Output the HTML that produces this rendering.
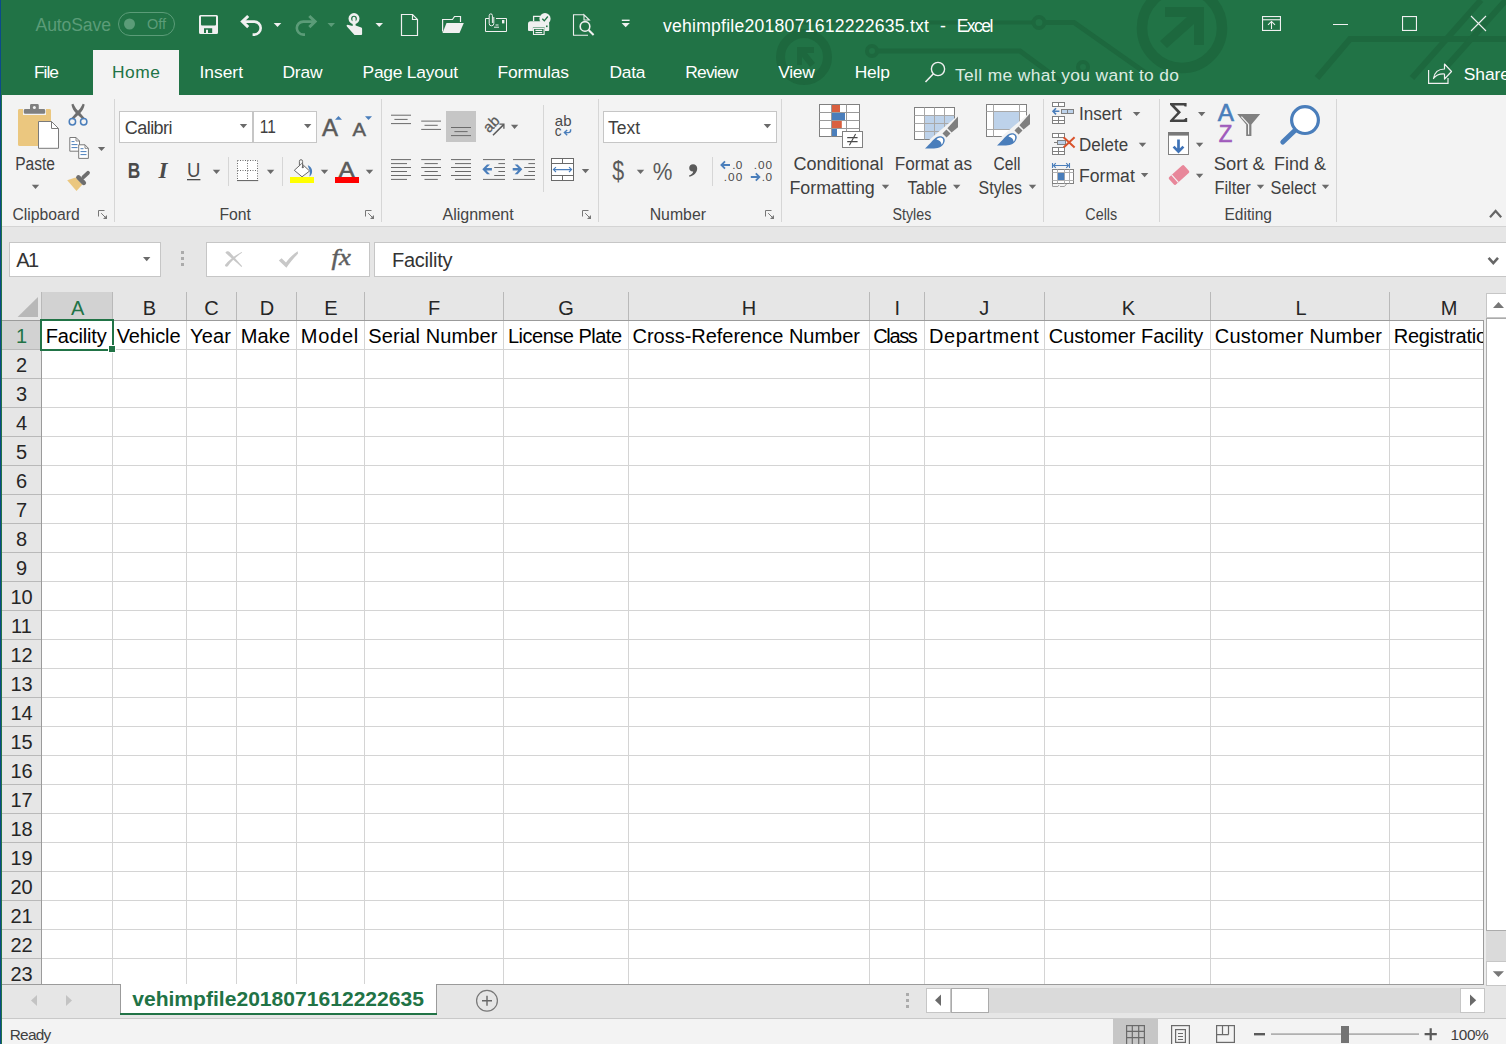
<!DOCTYPE html>
<html lang="en"><head><meta charset="utf-8"><title>vehimpfile2018071612222635.txt - Excel</title>
<style>
html,body{margin:0;padding:0;}
body{width:1506px;height:1044px;overflow:hidden;background:#e6e6e6;position:relative;
 font-family:"Liberation Sans",sans-serif;}
svg{position:absolute;left:0;display:block;font-family:"Liberation Sans",sans-serif;}
svg text{white-space:pre;}
</style></head><body>
<div id="titlebar">
<svg style="top:0px" class="title" width="1506" height="95" viewBox="0 0 1506 95">
<rect x="0" y="0" width="1506" height="95" fill="#217346"/>
<g><circle cx="804" cy="57" r="23.5" fill="none" stroke="#1d683e" stroke-width="9"/><path d="M797,47 h17 v6 h-7 l8,10 l-5,4 l-8,-10 v8 h-5 z" fill="#1d683e"/><circle cx="872" cy="51" r="5" fill="none" stroke="#1d683e" stroke-width="4"/><path d="M878,51 H1020 L1062,82" fill="none" stroke="#1d683e" stroke-width="5"/><path d="M760,22.5 H1032" fill="none" stroke="#1d683e" stroke-width="4"/><circle cx="1039" cy="22.5" r="5.5" fill="none" stroke="#1d683e" stroke-width="4"/><path d="M1046,22.5 H1074 L1150,76" fill="none" stroke="#1d683e" stroke-width="5"/><circle cx="1083" cy="67" r="5" fill="none" stroke="#1d683e" stroke-width="4"/><circle cx="1182" cy="28" r="40" fill="none" stroke="#1d683e" stroke-width="10.5"/><path d="M1165,7 h39 v38 h-10 v-21 l-27,24 l-7,-7 l27,-24 h-22 z" fill="#1d683e"/><path d="M1506,39 H1350 L1317,78" fill="none" stroke="#1d683e" stroke-width="6"/><path d="M1481,0 L1412,78" fill="none" stroke="#1d683e" stroke-width="6"/><path d="M1506,0 L1447,66" fill="none" stroke="#1d683e" stroke-width="6"/></g>
<text x="35.5" y="31" font-size="17.6" fill="#5b9c78" textLength="75.5" lengthAdjust="spacing">AutoSave</text>
<rect x="118.5" y="12.5" width="56" height="23" fill="none" stroke="#5b9c78" stroke-width="1" rx="11.5"/>
<circle cx="129.5" cy="24" r="5.5" fill="#5b9c78"/>
<text x="147" y="28.7" font-size="14.5" fill="#5b9c78" textLength="19" lengthAdjust="spacing">Off</text>
<path d="M200.5,15 h16 a1.5,1.5 0 0 1 1.5,1.5 v16 a1.5,1.5 0 0 1 -1.5,1.5 h-16 a1.5,1.5 0 0 1 -1.5,-1.5 v-16 a1.5,1.5 0 0 1 1.5,-1.5 z M201,16.5 v8 a1,1 0 0 0 1,1 h13 a1,1 0 0 0 1,-1 v-8 z M204,28.3 v4.7 h2 v-3.2 h2 v3.2 h4.2 v-4.7 z" fill="#f0f0f0" fill-rule="evenodd"/>
<path d="M248.2,16 L242.4,21.6 L248.2,27.2" fill="none" stroke="#f0f0f0" stroke-width="3" stroke-linejoin="miter"/>
<path d="M242.5,21.6 H254.2 a6.5,6.5 0 0 1 0,13 H252.6" fill="none" stroke="#f0f0f0" stroke-width="2.6"/>
<polygon points="273.7,23 281.3,23 277.5,27" fill="#f0f0f0"/>
<path d="M309.3,16 L315.1,21.6 L309.3,27.2" fill="none" stroke="#5b9c78" stroke-width="3"/>
<path d="M315,21.6 H303.3 a6.5,6.5 0 0 0 0,13 H305" fill="none" stroke="#5b9c78" stroke-width="2.6"/>
<polygon points="327.5,23 335,23 331.25,27" fill="#5b9c78"/>
<circle cx="354" cy="18.6" r="4.2" fill="none" stroke="#f0f0f0" stroke-width="2.6"/>
<path d="M352.4,18.4 a1.6,1.6 0 0 1 3.2,0 v7.1 l5.7,2 a1.2,1.2 0 0 1 0.8,1.2 v5.3 a1,1 0 0 1 -1,1 h-6.6 l-7.6,-8.6 a1,1 0 0 1 0.6,-1.6 l5.2,1.2 z" fill="#f0f0f0"/>
<polygon points="375.5,23 383,23 379.25,27" fill="#f0f0f0"/>
<path d="M401.5,14.5 H412.5 L417.5,19.5 V35.5 H401.5 Z" fill="none" stroke="#f0f0f0" stroke-width="1.2"/>
<path d="M412.5,14.5 V19.5 H417.5" fill="none" stroke="#f0f0f0" stroke-width="1.2"/>
<path d="M442.6,31.5 V19.5 H452.5 L454.5,16.5 H460.5 V22" fill="none" stroke="#f0f0f0" stroke-width="1.2"/>
<path d="M442.5,33 L446.5,23 H463.8 L459.5,33 Z" fill="#f0f0f0"/>
<path d="M489,18.5 H485.5 V31.5 H506.5 V18.5 H496" fill="none" stroke="#f0f0f0" stroke-width="1"/>
<path d="M493.8,17 V23.5 a2.3,2.3 0 0 1 -4.6,0 V15.5 a1.6,1.6 0 0 1 3.2,0 V23" fill="none" stroke="#f0f0f0" stroke-width="1"/>
<rect x="502" y="20" width="2.4" height="3.4" fill="#f0f0f0"/>
<rect x="495.5" y="24.5" width="3" height="1" fill="#f0f0f0"/>
<rect x="494" y="26.7" width="5" height="1" fill="#f0f0f0"/>
<path d="M530.6,21.3 h16 a2.6,2.6 0 0 1 2.6,2.6 v6 a1,1 0 0 1 -1,1 h-3.5 v-3.4 h-11.8 v3.4 h-3.9 a1,1 0 0 1 -1,-1 v-6 a2.6,2.6 0 0 1 2.6,-2.6 z" fill="#f0f0f0"/>
<path d="M533.6,21 V16.3 H540" fill="none" stroke="#f0f0f0" stroke-width="1.3"/>
<path d="M533.5,28.5 h10.6 v6 h-10.6 z M535.4,30.4 h6.8 M535.4,32.6 h6.8" fill="none" stroke="#f0f0f0" stroke-width="1.1"/>
<circle cx="545" cy="18.7" r="5.6" fill="#f0f0f0"/>
<path d="M542.3,18.8 l2,2 l3.5,-4.3" fill="none" stroke="#217346" stroke-width="1.3"/>
<rect x="546" y="25.5" width="1.6" height="1.6" fill="#217346"/>
<path d="M584,14.8 H573.5 V35.2 H588 M589.3,20 L584,14.8 V20 Z" fill="none" stroke="#f0f0f0" stroke-width="1.1"/>
<circle cx="585" cy="26.4" r="4.8" fill="#217346" stroke="#f0f0f0" stroke-width="1.6"/>
<path d="M588.6,30 L593.6,35" fill="none" stroke="#f0f0f0" stroke-width="2"/>
<rect x="621.8" y="19.6" width="7.8" height="1.4" fill="#f0f0f0"/>
<polygon points="621.6,23 629.8,23 625.7,27.2" fill="#f0f0f0"/>
<text x="663" y="31.7" font-size="17.6" fill="#ffffff" textLength="266" lengthAdjust="spacing">vehimpfile2018071612222635.txt</text>
<text x="940" y="31.7" font-size="17.6" fill="#ffffff" textLength="5" lengthAdjust="spacing">-</text>
<text x="956.7" y="31.7" font-size="17.6" fill="#ffffff" textLength="36.6" lengthAdjust="spacing">Excel</text>
<rect x="1262.55" y="16.55" width="17.9" height="13.9" fill="none" stroke="#f0f0f0" stroke-width="1.1"/>
<rect x="1262.5" y="19.2" width="18" height="1.1" fill="#f0f0f0"/>
<path d="M1271.5,29 V21.5 M1268,24.8 L1271.5,21.4 L1275,24.8" fill="none" stroke="#f0f0f0" stroke-width="1.1"/>
<rect x="1333" y="24" width="15" height="1" fill="#f0f0f0"/>
<rect x="1402.55" y="16.55" width="13.9" height="13.9" fill="none" stroke="#f0f0f0" stroke-width="1.1"/>
<path d="M1471,16 L1486,31 M1486,16 L1471,31" fill="none" stroke="#f0f0f0" stroke-width="1.1"/>
<rect x="93" y="50" width="86" height="45" fill="#f3f3f3"/>
<text x="34" y="77.6" font-size="17.4" fill="#ffffff" textLength="25" lengthAdjust="spacing">File</text>
<text x="112" y="77.6" font-size="17.4" fill="#217346" textLength="48" lengthAdjust="spacing">Home</text>
<text x="199.5" y="77.6" font-size="17.4" fill="#ffffff" textLength="43.5" lengthAdjust="spacing">Insert</text>
<text x="282.5" y="77.6" font-size="17.4" fill="#ffffff" textLength="40" lengthAdjust="spacing">Draw</text>
<text x="362.5" y="77.6" font-size="17.4" fill="#ffffff" textLength="95.5" lengthAdjust="spacing">Page Layout</text>
<text x="497.5" y="77.6" font-size="17.4" fill="#ffffff" textLength="71.5" lengthAdjust="spacing">Formulas</text>
<text x="609.5" y="77.6" font-size="17.4" fill="#ffffff" textLength="36" lengthAdjust="spacing">Data</text>
<text x="685.3" y="77.6" font-size="17.4" fill="#ffffff" textLength="53" lengthAdjust="spacing">Review</text>
<text x="778.3" y="77.6" font-size="17.4" fill="#ffffff" textLength="36.4" lengthAdjust="spacing">View</text>
<text x="854.7" y="77.6" font-size="17.4" fill="#ffffff" textLength="35.3" lengthAdjust="spacing">Help</text>
<circle cx="938" cy="69" r="6.6" fill="none" stroke="#f0f0f0" stroke-width="1.4"/>
<path d="M933.4,73.8 L925.5,82" fill="none" stroke="#f0f0f0" stroke-width="1.6"/>
<text x="955" y="80.8" font-size="17.4" fill="#dcebe2" textLength="224" lengthAdjust="spacing">Tell me what you want to do</text>
<path d="M1428.6,70 V83.4 H1448 V78" fill="none" stroke="#f0f0f0" stroke-width="1.2"/>
<path d="M1433.5,78.5 C1434.5,72 1439,69 1444.5,69 V64 L1451.5,71.5 L1444.5,79 V74 C1440,73.7 1436,75 1433.5,78.5 Z" fill="none" stroke="#f0f0f0" stroke-width="1.2" stroke-linejoin="round"/>
<text x="1463.7" y="80.3" font-size="17.4" fill="#ffffff" textLength="46.3" lengthAdjust="spacing">Share</text>
<rect x="0" y="0" width="1" height="95" fill="#0b4a8a"/>
</svg>
</div>
<div id="ribbon">
<svg style="top:95px" class="ribbon" width="1506" height="132" viewBox="0 95 1506 132">
<rect x="0" y="95" width="1506" height="131" fill="#f3f3f3"/>
<rect x="2" y="226" width="1504" height="1" fill="#d4d4d4"/>
<rect x="114" y="99" width="1" height="123" fill="#d6d6d6"/>
<rect x="381" y="99" width="1" height="123" fill="#d6d6d6"/>
<rect x="598" y="99" width="1" height="123" fill="#d6d6d6"/>
<rect x="781" y="99" width="1" height="123" fill="#d6d6d6"/>
<rect x="1043" y="99" width="1" height="123" fill="#d6d6d6"/>
<rect x="1159" y="99" width="1" height="123" fill="#d6d6d6"/>
<rect x="1336" y="99" width="1" height="123" fill="#d6d6d6"/>
<rect x="543" y="105" width="1" height="87" fill="#d6d6d6"/>
<rect x="228" y="157" width="1" height="29" fill="#d6d6d6"/>
<rect x="282" y="157" width="1" height="29" fill="#d6d6d6"/>
<rect x="712" y="157" width="1" height="29" fill="#d6d6d6"/>
<rect x="18" y="109" width="33" height="37" fill="#ebc77f" stroke="none" stroke-width="0" rx="2"/>
<rect x="18" y="109" width="33" height="37" rx="2" fill="#ebc77f"/>
<rect x="23" y="109" width="23" height="6" fill="#f3f3f3"/>
<path d="M30,109 v-3.6 a1.4,1.4 0 0 1 1.4,-1.4 h6 a1.4,1.4 0 0 1 1.4,1.4 v3.6 h5 a1.4,1.4 0 0 1 1.4,1.4 v2 a1.4,1.4 0 0 1 -1.4,1.4 h-18.6 a1.4,1.4 0 0 1 -1.4,-1.4 v-2 a1.4,1.4 0 0 1 1.4,-1.4 z" fill="#808080"/>
<circle cx="34.4" cy="107.5" r="1.5" fill="#f3f3f3"/>
<path d="M38.5,121.5 H51.5 L58.5,128.5 V148.3 H38.5 Z" fill="#ffffff" stroke="#7a7a7a" stroke-width="1"/>
<path d="M51.5,121.5 V128.5 H58.5" fill="none" stroke="#7a7a7a" stroke-width="1"/>
<text x="15.2" y="169.6" font-size="18" fill="#404040" textLength="39.8" lengthAdjust="spacingAndGlyphs">Paste</text>
<polygon points="31.8,184.8 39.2,184.8 35.5,189" fill="#6a6a6a"/>
<path d="M71.4,104.4 L73.4,103.8 C74.6,107 77,110 79.8,112.6 L85,118.4 L82.8,119.6 L76.2,113.4 C73.8,111 72,108 71.4,104.4 Z" fill="#6e6e6e"/>
<path d="M84.7,104.4 L82.7,103.8 C81.5,107 79.1,110 76.3,112.6 L71.1,118.4 L73.3,119.6 L79.9,113.4 C82.3,111 84.1,108 84.7,104.4 Z" fill="#6e6e6e"/>
<circle cx="72.4" cy="121.8" r="3.2" fill="none" stroke="#4a7ebb" stroke-width="1.5"/>
<circle cx="83.7" cy="121.8" r="3.2" fill="none" stroke="#4a7ebb" stroke-width="1.5"/>
<path d="M69.8,137.5 H76 L79.5,141 V151.2 H69.8 Z" fill="#ffffff" stroke="#7a7a7a" stroke-width="1"/>
<path d="M76,137.5 V141 H79.5" fill="none" stroke="#7a7a7a" stroke-width="0.9"/>
<path d="M71.5,141.6 h3 M71.5,144.6 h6 M71.5,147.6 h6" fill="none" stroke="#4a7ebb" stroke-width="1"/>
<path d="M78.7,144.8 H85 L88.4,148.3 V158.4 H78.7 Z" fill="#ffffff" stroke="#7a7a7a" stroke-width="1"/>
<path d="M85,144.8 V148.3 H88.4" fill="none" stroke="#7a7a7a" stroke-width="0.9"/>
<path d="M80.5,148.7 h3 M80.5,151.6 h6 M80.5,154.6 h6" fill="none" stroke="#4a7ebb" stroke-width="1"/>
<polygon points="97.8,146.9 105.2,146.9 101.5,151.1" fill="#6a6a6a"/>
<polygon points="67.2,180.2 75.5,177.6 82.4,184.6 76.5,191 " fill="#ebc77f"/>
<path d="M78.4,177.4 L83.8,182.8" fill="none" stroke="#6e6e6e" stroke-width="4.6" stroke-linecap="round"/>
<path d="M83.4,177.2 L88,172.8" fill="none" stroke="#6e6e6e" stroke-width="3.8" stroke-linecap="round"/>
<text x="12.5" y="220" font-size="16.9" fill="#444444" textLength="67.2" lengthAdjust="spacingAndGlyphs">Clipboard</text>
<path d="M98.5,216.5 V210.5 H104.5" fill="none" stroke="#777777" stroke-width="1"/>
<path d="M101.2,213.2 L106,218" fill="none" stroke="#777777" stroke-width="1"/>
<path d="M103,219 H107 V215 Z" fill="#777777"/>
<rect x="119.5" y="111.5" width="133" height="31" fill="#ffffff" stroke="#c6c6c6" stroke-width="1"/>
<rect x="253.5" y="111.5" width="63" height="31" fill="#ffffff" stroke="#c6c6c6" stroke-width="1"/>
<text x="124.8" y="133.9" font-size="18" fill="#404040" textLength="47.7" lengthAdjust="spacing">Calibri</text>
<text x="259.7" y="133.4" font-size="18" fill="#404040" textLength="16.1" lengthAdjust="spacingAndGlyphs">11</text>
<polygon points="239.8,124 247.2,124 243.5,128.2" fill="#6a6a6a"/>
<polygon points="304,124 311.4,124 307.7,128.2" fill="#6a6a6a"/>
<text x="322" y="136" font-size="23.8" fill="#5a5a5a" textLength="16" lengthAdjust="spacingAndGlyphs" stroke="#5a5a5a" stroke-width="0.5">A</text>
<polygon points="335,119.8 342,119.8 338.5,116" fill="#4a7ebb"/>
<text x="352.5" y="136" font-size="19.2" fill="#5a5a5a" textLength="13.5" lengthAdjust="spacingAndGlyphs" stroke="#5a5a5a" stroke-width="0.5">A</text>
<polygon points="365,116.2 372,116.2 368.5,120" fill="#4a7ebb"/>
<text x="127.7" y="177.6" font-size="21.8" fill="#4a4a4a" textLength="12.5" lengthAdjust="spacingAndGlyphs" font-weight="bold">B</text>
<text x="158.5" y="177.6" font-size="23" fill="#4a4a4a" textLength="9" lengthAdjust="spacingAndGlyphs" font-weight="bold" font-style="italic" font-family='"Liberation Serif", serif'>I</text>
<text x="186.9" y="177.2" font-size="21" fill="#4a4a4a" textLength="13.4" lengthAdjust="spacingAndGlyphs">U</text>
<rect x="187" y="179" width="13.4" height="1.3" fill="#4a4a4a"/>
<polygon points="212.8,169.8 220.2,169.8 216.5,174" fill="#6a6a6a"/>
<rect x="237.5" y="160.5" width="20" height="20" fill="#ffffff"/>
<path d="M237.5,160.5 H257.5 M237.5,170.5 H257.5 M237.5,160.5 V180 M247.5,160.5 V180 M257.5,160.5 V180" fill="none" stroke="#6a6a6a" stroke-width="1" stroke-dasharray="1,1.5"/>
<rect x="237" y="180" width="21.2" height="1.1" fill="#6a6a6a"/>
<polygon points="266.9,169.8 274.3,169.8 270.6,174" fill="#6a6a6a"/>
<path d="M301.7,163.6 L309.6,171 L302,176.8 L294.3,170.3 Z" fill="#ffffff" stroke="#6a6a6a" stroke-width="1"/>
<path d="M299.4,165.5 V161.3 a1.6,1.6 0 0 1 3.2,0 V167" fill="none" stroke="#6a6a6a" stroke-width="1"/>
<circle cx="302.8" cy="167.2" r="1.1" fill="#6a6a6a"/>
<path d="M307.8,165.2 C311,166.5 312.6,169.5 312,172.5 C311.6,174.5 310.6,176 309.4,176.4 C310.2,173 310,170 308.6,168 Z" fill="#4a7ebb"/>
<rect x="290" y="177" width="24" height="6" fill="#ffff00"/>
<polygon points="320.8,169.8 328.2,169.8 324.5,174" fill="#6a6a6a"/>
<text x="338.8" y="176.8" font-size="21.2" fill="#5a5a5a" textLength="15.8" lengthAdjust="spacingAndGlyphs" stroke="#5a5a5a" stroke-width="0.6">A</text>
<rect x="335" y="177" width="24" height="6" fill="#ff0000"/>
<polygon points="365.8,169.8 373.2,169.8 369.5,174" fill="#6a6a6a"/>
<text x="219.5" y="220" font-size="16.9" fill="#444444" textLength="31.5" lengthAdjust="spacingAndGlyphs">Font</text>
<path d="M365.5,216.5 V210.5 H371.5" fill="none" stroke="#777777" stroke-width="1"/>
<path d="M368.2,213.2 L373,218" fill="none" stroke="#777777" stroke-width="1"/>
<path d="M370,219 H374 V215 Z" fill="#777777"/>
<rect x="391" y="114.7" width="20" height="1" fill="#6a6a6a"/>
<rect x="394.4" y="118.9" width="13.2" height="1" fill="#6a6a6a"/>
<rect x="391" y="123.1" width="20" height="1" fill="#6a6a6a"/>
<rect x="421.2" y="120.6" width="19.8" height="1" fill="#6a6a6a"/>
<rect x="424.5" y="124.8" width="13.2" height="1" fill="#6a6a6a"/>
<rect x="421.2" y="128.9" width="19.8" height="1" fill="#6a6a6a"/>
<rect x="446" y="111" width="30" height="31" fill="#c6c6c6"/>
<rect x="451" y="127" width="20" height="1" fill="#6a6a6a"/>
<rect x="454.4" y="131.1" width="13.2" height="1" fill="#6a6a6a"/>
<rect x="451" y="135.1" width="20" height="1" fill="#6a6a6a"/>
<rect x="391" y="159.1" width="20" height="1" fill="#6a6a6a"/>
<rect x="391" y="163.1" width="16" height="1" fill="#6a6a6a"/>
<rect x="391" y="167" width="20" height="1" fill="#6a6a6a"/>
<rect x="391" y="171" width="16" height="1" fill="#6a6a6a"/>
<rect x="391" y="175" width="20" height="1" fill="#6a6a6a"/>
<rect x="391" y="178.9" width="16" height="1" fill="#6a6a6a"/>
<rect x="421.2" y="159.1" width="19.8" height="1" fill="#6a6a6a"/>
<rect x="424.5" y="163.1" width="13.3" height="1" fill="#6a6a6a"/>
<rect x="421.2" y="167" width="19.8" height="1" fill="#6a6a6a"/>
<rect x="424.5" y="171" width="13.3" height="1" fill="#6a6a6a"/>
<rect x="421.2" y="175" width="19.8" height="1" fill="#6a6a6a"/>
<rect x="424.5" y="178.9" width="13.3" height="1" fill="#6a6a6a"/>
<rect x="451" y="159.1" width="20" height="1" fill="#6a6a6a"/>
<rect x="455" y="163.1" width="16" height="1" fill="#6a6a6a"/>
<rect x="451" y="167" width="20" height="1" fill="#6a6a6a"/>
<rect x="455" y="171" width="16" height="1" fill="#6a6a6a"/>
<rect x="451" y="175" width="20" height="1" fill="#6a6a6a"/>
<rect x="455" y="178.9" width="16" height="1" fill="#6a6a6a"/>
<rect x="483" y="159.1" width="22" height="1" fill="#6a6a6a"/>
<rect x="498.4" y="163.1" width="6.6" height="1" fill="#6a6a6a"/>
<rect x="494.2" y="167" width="10.8" height="1" fill="#6a6a6a"/>
<rect x="498.4" y="171" width="6.6" height="1" fill="#6a6a6a"/>
<rect x="494.2" y="175" width="10.8" height="1" fill="#6a6a6a"/>
<rect x="483" y="178.9" width="22" height="1" fill="#6a6a6a"/>
<rect x="513" y="159.1" width="22" height="1" fill="#6a6a6a"/>
<rect x="528.4" y="163.1" width="6.6" height="1" fill="#6a6a6a"/>
<rect x="524.2" y="167" width="10.8" height="1" fill="#6a6a6a"/>
<rect x="528.4" y="171" width="6.6" height="1" fill="#6a6a6a"/>
<rect x="524.2" y="175" width="10.8" height="1" fill="#6a6a6a"/>
<rect x="513" y="178.9" width="22" height="1" fill="#6a6a6a"/>
<path d="M482.3,169.3 L487,164.4 H490 L486.4,168 H491.9 V170.6 H486.4 L490,174.2 H487 Z" fill="#4a7ebb"/>
<path d="M522.3,169.3 L517.6,164.4 H514.6 L518.2,168 H512.7 V170.6 H518.2 L514.6,174.2 H517.6 Z" fill="#4a7ebb"/>
<g transform="translate(489,133.4) rotate(-45)"><text x="0" y="0" font-size="15" fill="#5a5a5a" stroke="#5a5a5a" stroke-width="0.3" textLength="16.4" lengthAdjust="spacingAndGlyphs">ab</text></g>
<path d="M493,135.2 L503.6,124.6" fill="none" stroke="#5a5a5a" stroke-width="1.5"/>
<path d="M499.4,124.1 H503.9 V128.8" fill="none" stroke="#5a5a5a" stroke-width="1.3"/>
<polygon points="510.9,124.7 518.3,124.7 514.6,128.9" fill="#6a6a6a"/>
<text x="554.8" y="125.5" font-size="14.5" fill="#4a4a4a" textLength="16.7" lengthAdjust="spacingAndGlyphs">ab</text>
<text x="554.8" y="135.7" font-size="14.5" fill="#4a4a4a" textLength="6.8" lengthAdjust="spacingAndGlyphs">c</text>
<path d="M570.6,129.3 V130.6 a2,2 0 0 1 -2,2 H564.8 M567.2,130 L564.4,132.6 L567.2,135.2" fill="none" stroke="#4a7ebb" stroke-width="1.4"/>
<rect x="551.5" y="158.5" width="22" height="22" fill="#ffffff" stroke="#6a6a6a" stroke-width="1"/>
<path d="M551.5,163.5 H573.5 M551.5,175.5 H573.5 M562.5,158.5 V163.5 M562.5,175.5 V180.5" fill="none" stroke="#6a6a6a" stroke-width="1"/>
<path d="M553.6,169.6 H571.4 M556,167.2 L553.4,169.6 L556,172 M569,167.2 L571.6,169.6 L569,172" fill="none" stroke="#4a7ebb" stroke-width="1.1"/>
<polygon points="581.8,169 589.2,169 585.5,173.2" fill="#6a6a6a"/>
<text x="442.5" y="220" font-size="16.9" fill="#444444" textLength="71.2" lengthAdjust="spacingAndGlyphs">Alignment</text>
<path d="M582.5,216.5 V210.5 H588.5" fill="none" stroke="#777777" stroke-width="1"/>
<path d="M585.2,213.2 L590,218" fill="none" stroke="#777777" stroke-width="1"/>
<path d="M587,219 H591 V215 Z" fill="#777777"/>
<rect x="603.5" y="111.5" width="173" height="31" fill="#ffffff" stroke="#c6c6c6" stroke-width="1"/>
<text x="608" y="133.7" font-size="18" fill="#404040" textLength="32" lengthAdjust="spacingAndGlyphs">Text</text>
<polygon points="763.7,124 771.1,124 767.4,128.2" fill="#6a6a6a"/>
<text x="612.3" y="179.9" font-size="27" fill="#5a5a5a" textLength="11.9" lengthAdjust="spacingAndGlyphs">$</text>
<polygon points="636.8,169.8 644.2,169.8 640.5,174" fill="#6a6a6a"/>
<text x="652.8" y="180" font-size="24.5" fill="#5a5a5a" textLength="19.7" lengthAdjust="spacingAndGlyphs">%</text>
<path d="M693,164.2 C695.6,164.2 697.2,166 697.2,168.6 C697.2,172.6 694,175.6 689.4,176.8 L689,175.6 C691.6,174.6 693,173.2 693.2,171.6 C690.8,171.8 689.2,170.2 689.2,168 C689.2,165.8 690.8,164.2 693,164.2 Z" fill="#5a5a5a"/>
<path d="M725,161.4 L721.4,165 L725,168.6 M721.8,165 H730" fill="none" stroke="#4a7ebb" stroke-width="1.8"/>
<text x="732.2" y="168.7" font-size="11.8" fill="#4a4a4a" textLength="10" lengthAdjust="spacing">.0</text>
<text x="723.8" y="180.7" font-size="11.8" fill="#4a4a4a" textLength="18.4" lengthAdjust="spacing">.00</text>
<text x="753.7" y="168.7" font-size="11.8" fill="#4a4a4a" textLength="18.4" lengthAdjust="spacing">.00</text>
<path d="M755.8,173.4 L759.4,177 L755.8,180.6 M759,177 H750.8" fill="none" stroke="#4a7ebb" stroke-width="1.8"/>
<text x="761.8" y="180.7" font-size="11.8" fill="#4a4a4a" textLength="10.3" lengthAdjust="spacing">.0</text>
<text x="649.7" y="220" font-size="16.9" fill="#444444" textLength="56.3" lengthAdjust="spacingAndGlyphs">Number</text>
<path d="M765.5,216.5 V210.5 H771.5" fill="none" stroke="#777777" stroke-width="1"/>
<path d="M768.2,213.2 L773,218" fill="none" stroke="#777777" stroke-width="1"/>
<path d="M770,219 H774 V215 Z" fill="#777777"/>
<rect x="819.5" y="104.5" width="40" height="32" fill="#ffffff" stroke="#808080" stroke-width="1"/>
<path d="M819.5,112.5 H859.5 M819.5,120.5 H859.5 M819.5,128.5 H859.5 M831.5,104.5 V136.5 M846.5,104.5 V136.5" fill="none" stroke="#9a9a9a" stroke-width="1"/>
<rect x="832" y="105" width="8" height="7" fill="#d9603f"/>
<rect x="832" y="113" width="13" height="7" fill="#4a7ebb"/>
<rect x="832" y="121" width="9.8" height="7" fill="#d9603f"/>
<rect x="832" y="129" width="5" height="7" fill="#4a7ebb"/>
<rect x="842.5" y="131.5" width="20" height="16" fill="#ffffff" stroke="#808080" stroke-width="1"/>
<path d="M847.2,137.6 H857.6 M847.2,141.6 H857.6 M855.6,134 L849.4,145.2" fill="none" stroke="#4a4a4a" stroke-width="1.1"/>
<text x="793.5" y="169.6" font-size="18" fill="#404040" textLength="90.1" lengthAdjust="spacingAndGlyphs">Conditional</text>
<text x="789.4" y="193.5" font-size="18" fill="#404040" textLength="85.4" lengthAdjust="spacingAndGlyphs">Formatting</text>
<polygon points="881.8,184.8 889.2,184.8 885.5,189" fill="#6a6a6a"/>
<rect x="914.5" y="107.5" width="40" height="32" fill="#ffffff" stroke="#808080" stroke-width="1"/>
<rect x="925" y="116" width="29" height="23" fill="#bdd2ea"/>
<path d="M914.5,115.5 H954.5 M914.5,123.5 H954.5 M914.5,131.5 H954.5 M924.5,107.5 V139.5 M934.5,107.5 V139.5 M944.5,107.5 V139.5" fill="none" stroke="#a8a8a8" stroke-width="1"/>
<polygon points="955,118 958.5,114 958.5,150 920,150 920,148 936,134" fill="#f3f3f3"/>
<polygon points="958,116.5 958,127.3 951.6,132.4 947.4,128.2" fill="#7f7f7f"/>
<polygon points="946.4,129.4 950.5,133.5 946.6,137.6 942.5,133.6" fill="#7f7f7f"/>
<path d="M925,148.4 C931,143.5 934,137 939.5,136.2 C943,135.8 945.5,138.5 944.6,141.5 C943.5,146 939,148.4 934,148.4 Z" fill="#4a7ebb"/>
<path d="M936.5,139.5 C938,137.6 940.8,137 942.4,138.2 C943.8,139.6 943.4,142.8 941.6,144.8 C941.4,142 939.4,140 936.5,139.5 Z" fill="#ffffff"/>
<text x="894.8" y="169.6" font-size="18" fill="#404040" textLength="77.2" lengthAdjust="spacingAndGlyphs">Format as</text>
<text x="907.5" y="193.5" font-size="18" fill="#404040" textLength="39.4" lengthAdjust="spacingAndGlyphs">Table</text>
<polygon points="953,184.8 960.4,184.8 956.7,189" fill="#6a6a6a"/>
<rect x="986.5" y="104.5" width="40" height="32" fill="#ffffff" stroke="#808080" stroke-width="1"/>
<rect x="994" y="112" width="25" height="17" fill="#bdd2ea"/>
<path d="M986.5,111.5 H1026.5 M986.5,129.5 H1026.5 M993.5,104.5 V136.5 M1019.5,104.5 V136.5" fill="none" stroke="#a8a8a8" stroke-width="1"/>
<polygon points="1027,115 1030.5,111 1030.5,147 992,147 992,145 1008,131" fill="#f3f3f3"/>
<polygon points="1030,113.5 1030,124.3 1023.6,129.4 1019.4,125.2" fill="#7f7f7f"/>
<polygon points="1018.4,126.4 1022.5,130.5 1018.6,134.6 1014.5,130.6" fill="#7f7f7f"/>
<path d="M997,145.4 C1003,140.5 1006,134 1011.5,133.2 C1015,132.8 1017.5,135.5 1016.6,138.5 C1015.5,143 1011,145.4 1006,145.4 Z" fill="#4a7ebb"/>
<path d="M1008.5,136.5 C1010,134.6 1012.8,134 1014.4,135.2 C1015.8,136.6 1015.4,139.8 1013.6,141.8 C1013.4,139 1011.4,137 1008.5,136.5 Z" fill="#ffffff"/>
<text x="993.4" y="169.6" font-size="18" fill="#404040" textLength="27" lengthAdjust="spacingAndGlyphs">Cell</text>
<text x="978.6" y="193.5" font-size="18" fill="#404040" textLength="43.4" lengthAdjust="spacingAndGlyphs">Styles</text>
<polygon points="1028.8,184.8 1036.2,184.8 1032.5,189" fill="#6a6a6a"/>
<text x="892.5" y="220" font-size="16.9" fill="#444444" textLength="38.8" lengthAdjust="spacingAndGlyphs">Styles</text>
<rect x="1052.5" y="102.5" width="12" height="4" fill="#ffffff" stroke="#808080" stroke-width="1"/>
<path d="M1058.5,102.5 V106.5" fill="none" stroke="#808080" stroke-width="1"/>
<rect x="1061.5" y="109.5" width="12" height="4" fill="#bdd2ea" stroke="#808080" stroke-width="1"/>
<rect x="1067" y="109.5" width="1" height="4" fill="#808080"/>
<path d="M1056,108.2 L1053,111.3 L1056,114.4 M1053.4,111.3 H1059.4" fill="none" stroke="#4a7ebb" stroke-width="1.6"/>
<rect x="1052.5" y="116.5" width="12" height="7" fill="#ffffff" stroke="#808080" stroke-width="1"/>
<path d="M1058.5,116.5 V123.5 M1052.5,120.5 H1064.5" fill="none" stroke="#808080" stroke-width="1"/>
<text x="1079" y="119.8" font-size="18" fill="#404040" textLength="42.8" lengthAdjust="spacingAndGlyphs">Insert</text>
<polygon points="1132.9,111.9 1140.3,111.9 1136.6,116.1" fill="#6a6a6a"/>
<rect x="1052.5" y="133.5" width="12" height="4" fill="#ffffff" stroke="#808080" stroke-width="1"/>
<path d="M1058.5,133.5 V137.5" fill="none" stroke="#808080" stroke-width="1"/>
<rect x="1057.5" y="140.5" width="8" height="4" fill="#bdd2ea" stroke="#808080" stroke-width="1"/>
<rect x="1054" y="142" width="3" height="1" fill="#808080"/>
<rect x="1052.5" y="147.5" width="12" height="7" fill="#ffffff" stroke="#808080" stroke-width="1"/>
<path d="M1058.5,147.5 V154.5 M1052.5,151.5 H1064.5" fill="none" stroke="#808080" stroke-width="1"/>
<rect x="1062" y="136" width="14" height="12" fill="#f3f3f3" opacity="0.0"/>
<path d="M1063.6,137.2 L1074.6,147.6 M1074.6,137.2 L1063.6,147.6" fill="none" stroke="#d9532c" stroke-width="2"/>
<text x="1079" y="150.9" font-size="18" fill="#404040" textLength="49.1" lengthAdjust="spacingAndGlyphs">Delete</text>
<polygon points="1138.8,142.8 1146.2,142.8 1142.5,147" fill="#6a6a6a"/>
<path d="M1052.5,163 V168 M1069.5,163 V168 M1053.5,165.5 H1068.5 M1055.8,163.2 L1053.4,165.5 L1055.8,167.8 M1066.2,163.2 L1068.6,165.5 L1066.2,167.8" fill="none" stroke="#4a7ebb" stroke-width="1.1"/>
<rect x="1052.5" y="169.5" width="21" height="14" fill="#ffffff" stroke="#808080" stroke-width="1"/>
<path d="M1052.5,172.5 H1073.5 M1052.5,180.5 H1073.5 M1057.5,169.5 V183.5 M1064.5,169.5 V183.5 M1069.5,169.5 V183.5" fill="none" stroke="#b0b0b0" stroke-width="1"/>
<rect x="1058" y="173" width="6.2" height="7" fill="#4a7ebb"/>
<path d="M1052.5,184 V186.5 H1058 L1059,185 M1060,186.5 H1064.5 L1066.5,184" fill="none" stroke="#a0a0a0" stroke-width="1"/>
<text x="1079" y="181.9" font-size="18" fill="#404040" textLength="55.8" lengthAdjust="spacingAndGlyphs">Format</text>
<polygon points="1140.9,173 1148.3,173 1144.6,177.2" fill="#6a6a6a"/>
<text x="1085.3" y="220" font-size="16.9" fill="#444444" textLength="31.9" lengthAdjust="spacingAndGlyphs">Cells</text>
<path d="M1170,103 H1186.6 V106.4 H1184.6 C1184.4,105.6 1184,105.4 1183,105.4 H1174.4 L1181,112.2 L1174,119.4 H1183.4 C1184.6,119.4 1185,119 1185.4,118 H1187.2 V121.9 H1169.9 V120.4 L1177.4,112.6 L1170,104.8 Z" fill="#444444"/>
<polygon points="1198,112.1 1205.4,112.1 1201.7,116.3" fill="#6a6a6a"/>
<rect x="1168.5" y="132.5" width="20" height="22" fill="#ffffff" stroke="#808080" stroke-width="1"/>
<rect x="1168" y="132" width="21" height="3.6" fill="#7a7a7a"/>
<path d="M1178.5,139.4 V151.4 M1173.6,146.6 L1178.5,151.6 L1183.4,146.6" fill="none" stroke="#3f73b7" stroke-width="2.7"/>
<polygon points="1195.9,142.8 1203.3,142.8 1199.6,147" fill="#6a6a6a"/>
<g transform="rotate(-42 1179 175)"><rect x="1168.8" y="170" width="20.4" height="10" rx="1.6" fill="#e8879a"/><rect x="1173" y="170" width="1.2" height="10" fill="#f3f3f3"/></g>
<polygon points="1195.9,173.8 1203.3,173.8 1199.6,178" fill="#6a6a6a"/>
<text x="1217.8" y="120.7" font-size="23.4" fill="#4a7ebb" textLength="16.2" lengthAdjust="spacingAndGlyphs" stroke="#4a7ebb" stroke-width="0.6">A</text>
<text x="1218.8" y="142" font-size="23.4" fill="#a05bbc" textLength="13.6" lengthAdjust="spacingAndGlyphs" stroke="#a05bbc" stroke-width="0.6">Z</text>
<path d="M1237.2,114 H1260.2 L1251.4,124.6 V136 H1246.2 V124.6 Z" fill="#808080"/>
<path d="M1241.4,116.6 L1248.6,124.4 V134.6" fill="none" stroke="#f3f3f3" stroke-width="1.2"/>
<text x="1213.8" y="169.6" font-size="18" fill="#404040" textLength="51.1" lengthAdjust="spacingAndGlyphs">Sort &amp;</text>
<text x="1214.4" y="193.5" font-size="18" fill="#404040" textLength="36.4" lengthAdjust="spacingAndGlyphs">Filter</text>
<polygon points="1256.8,184.8 1264.2,184.8 1260.5,189" fill="#6a6a6a"/>
<path d="M1295.4,130 L1282.8,142" fill="none" stroke="#4a7ebb" stroke-width="5" stroke-linecap="round"/>
<circle cx="1305" cy="120.1" r="13.4" fill="#ffffff" stroke="#4a7ebb" stroke-width="3.2"/>
<text x="1274.1" y="169.6" font-size="18" fill="#404040" textLength="51.8" lengthAdjust="spacingAndGlyphs">Find &amp;</text>
<text x="1270.6" y="193.5" font-size="18" fill="#404040" textLength="45.4" lengthAdjust="spacingAndGlyphs">Select</text>
<polygon points="1321.8,184.8 1329.2,184.8 1325.5,189" fill="#6a6a6a"/>
<text x="1224.5" y="220" font-size="16.9" fill="#444444" textLength="47.5" lengthAdjust="spacingAndGlyphs">Editing</text>
<path d="M1490,217.2 L1495.6,211 L1501.2,217.2" fill="none" stroke="#666666" stroke-width="2.2"/>
<rect x="0" y="95" width="1" height="132" fill="#0b4a8a"/>
<rect x="1" y="95" width="1" height="132" fill="#217346"/>
</svg>
</div>
<div id="formulabar">
<svg style="top:227px" class="formula" width="1506" height="65" viewBox="0 227 1506 65">
<rect x="0" y="227" width="1506" height="65" fill="#e6e6e6"/>
<rect x="9.5" y="242.5" width="151" height="34" fill="#ffffff" stroke="#c6c6c6" stroke-width="1"/>
<text x="16.2" y="267" font-size="20" fill="#333333" textLength="22.8" lengthAdjust="spacing">A1</text>
<polygon points="143,257 150.4,257 146.7,261.2" fill="#6a6a6a"/>
<rect x="181" y="251" width="3" height="3" fill="#ababab"/>
<rect x="181" y="257" width="3" height="3" fill="#ababab"/>
<rect x="181" y="263" width="3" height="3" fill="#ababab"/>
<rect x="206.5" y="242.5" width="163" height="34" fill="#ffffff" stroke="#c6c6c6" stroke-width="1"/>
<path d="M225.4,252.8 C226.6,251 228.6,251 229.8,252.2 L242.2,266.2 L241.4,266.9 C236,262 230,257.2 225.4,252.8 Z" fill="#c8c8c8"/>
<path d="M242.2,252.6 L241.6,251.9 C235,255.4 228.8,260 225,265 C224.8,266.6 226.6,267.2 227.8,266.2 C231,261.6 236,256.6 242.2,252.6 Z" fill="#c8c8c8"/>
<path d="M278.8,260.4 L281.6,258.2 L286,262.6 C289,258.2 293,254.4 297.7,251.2 L298,253.8 C293.6,258 289.6,263 286.4,267.8 Z" fill="#c8c8c8"/>
<text x="331.5" y="265.2" font-size="23" fill="#5e5e5e" textLength="19.3" lengthAdjust="spacingAndGlyphs" font-style="italic" font-family='"Liberation Serif", serif' stroke="#5e5e5e" stroke-width="0.45">fx</text>
<rect x="374.5" y="242.5" width="1139" height="34" fill="#ffffff" stroke="#c6c6c6" stroke-width="1"/>
<text x="392" y="267" font-size="20" fill="#333333" textLength="60.5" lengthAdjust="spacing">Facility</text>
<path d="M1488.6,257.8 L1493.3,263 L1498,257.8" fill="none" stroke="#666666" stroke-width="2.6"/>
<rect x="0" y="227" width="1" height="65" fill="#0b4a8a"/>
<rect x="1" y="227" width="1" height="65" fill="#217346"/>
</svg>
</div>
<div id="sheet">
<svg style="top:292px" class="grid" width="1506" height="692" viewBox="0 292 1506 692">
<rect x="0" y="292" width="1506" height="692" fill="#e6e6e6"/>
<rect x="42" y="321" width="1441" height="663" fill="#ffffff"/>
<rect x="42" y="292" width="70" height="28" fill="#d2d2d2"/>
<rect x="2" y="321" width="39" height="28" fill="#d2d2d2"/>
<polygon points="38,297 38,317 17.6,317" fill="#b8b8b8"/>
<rect x="41" y="292" width="1" height="28" fill="#b9b9b9"/>
<rect x="112" y="292" width="1" height="28" fill="#b9b9b9"/>
<rect x="186" y="292" width="1" height="28" fill="#b9b9b9"/>
<rect x="236" y="292" width="1" height="28" fill="#b9b9b9"/>
<rect x="296" y="292" width="1" height="28" fill="#b9b9b9"/>
<rect x="364" y="292" width="1" height="28" fill="#b9b9b9"/>
<rect x="503" y="292" width="1" height="28" fill="#b9b9b9"/>
<rect x="628" y="292" width="1" height="28" fill="#b9b9b9"/>
<rect x="869" y="292" width="1" height="28" fill="#b9b9b9"/>
<rect x="924" y="292" width="1" height="28" fill="#b9b9b9"/>
<rect x="1044" y="292" width="1" height="28" fill="#b9b9b9"/>
<rect x="1210" y="292" width="1" height="28" fill="#b9b9b9"/>
<rect x="1389" y="292" width="1" height="28" fill="#b9b9b9"/>
<text x="77.75" y="315" font-size="20" fill="#217346" text-anchor="middle">A</text>
<text x="149.5" y="315" font-size="20" fill="#262626" text-anchor="middle">B</text>
<text x="211.5" y="315" font-size="20" fill="#262626" text-anchor="middle">C</text>
<text x="267.05" y="315" font-size="20" fill="#262626" text-anchor="middle">D</text>
<text x="331" y="315" font-size="20" fill="#262626" text-anchor="middle">E</text>
<text x="434.15" y="315" font-size="20" fill="#262626" text-anchor="middle">F</text>
<text x="566.1" y="315" font-size="20" fill="#262626" text-anchor="middle">G</text>
<text x="749" y="315" font-size="20" fill="#262626" text-anchor="middle">H</text>
<text x="897.35" y="315" font-size="20" fill="#262626" text-anchor="middle">I</text>
<text x="984.15" y="315" font-size="20" fill="#262626" text-anchor="middle">J</text>
<text x="1128.5" y="315" font-size="20" fill="#262626" text-anchor="middle">K</text>
<text x="1301" y="315" font-size="20" fill="#262626" text-anchor="middle">L</text>
<text x="1449" y="315" font-size="20" fill="#262626" text-anchor="middle">M</text>
<rect x="112" y="321" width="1" height="663" fill="#d4d4d4"/>
<rect x="186" y="321" width="1" height="663" fill="#d4d4d4"/>
<rect x="236" y="321" width="1" height="663" fill="#d4d4d4"/>
<rect x="296" y="321" width="1" height="663" fill="#d4d4d4"/>
<rect x="364" y="321" width="1" height="663" fill="#d4d4d4"/>
<rect x="503" y="321" width="1" height="663" fill="#d4d4d4"/>
<rect x="628" y="321" width="1" height="663" fill="#d4d4d4"/>
<rect x="869" y="321" width="1" height="663" fill="#d4d4d4"/>
<rect x="924" y="321" width="1" height="663" fill="#d4d4d4"/>
<rect x="1044" y="321" width="1" height="663" fill="#d4d4d4"/>
<rect x="1210" y="321" width="1" height="663" fill="#d4d4d4"/>
<rect x="1389" y="321" width="1" height="663" fill="#d4d4d4"/>
<rect x="42" y="349" width="1441" height="1" fill="#d4d4d4"/>
<rect x="2" y="349" width="39" height="1" fill="#b9b9b9"/>
<rect x="42" y="378" width="1441" height="1" fill="#d4d4d4"/>
<rect x="2" y="378" width="39" height="1" fill="#b9b9b9"/>
<rect x="42" y="407" width="1441" height="1" fill="#d4d4d4"/>
<rect x="2" y="407" width="39" height="1" fill="#b9b9b9"/>
<rect x="42" y="436" width="1441" height="1" fill="#d4d4d4"/>
<rect x="2" y="436" width="39" height="1" fill="#b9b9b9"/>
<rect x="42" y="465" width="1441" height="1" fill="#d4d4d4"/>
<rect x="2" y="465" width="39" height="1" fill="#b9b9b9"/>
<rect x="42" y="494" width="1441" height="1" fill="#d4d4d4"/>
<rect x="2" y="494" width="39" height="1" fill="#b9b9b9"/>
<rect x="42" y="523" width="1441" height="1" fill="#d4d4d4"/>
<rect x="2" y="523" width="39" height="1" fill="#b9b9b9"/>
<rect x="42" y="552" width="1441" height="1" fill="#d4d4d4"/>
<rect x="2" y="552" width="39" height="1" fill="#b9b9b9"/>
<rect x="42" y="581" width="1441" height="1" fill="#d4d4d4"/>
<rect x="2" y="581" width="39" height="1" fill="#b9b9b9"/>
<rect x="42" y="610" width="1441" height="1" fill="#d4d4d4"/>
<rect x="2" y="610" width="39" height="1" fill="#b9b9b9"/>
<rect x="42" y="639" width="1441" height="1" fill="#d4d4d4"/>
<rect x="2" y="639" width="39" height="1" fill="#b9b9b9"/>
<rect x="42" y="668" width="1441" height="1" fill="#d4d4d4"/>
<rect x="2" y="668" width="39" height="1" fill="#b9b9b9"/>
<rect x="42" y="697" width="1441" height="1" fill="#d4d4d4"/>
<rect x="2" y="697" width="39" height="1" fill="#b9b9b9"/>
<rect x="42" y="726" width="1441" height="1" fill="#d4d4d4"/>
<rect x="2" y="726" width="39" height="1" fill="#b9b9b9"/>
<rect x="42" y="755" width="1441" height="1" fill="#d4d4d4"/>
<rect x="2" y="755" width="39" height="1" fill="#b9b9b9"/>
<rect x="42" y="784" width="1441" height="1" fill="#d4d4d4"/>
<rect x="2" y="784" width="39" height="1" fill="#b9b9b9"/>
<rect x="42" y="813" width="1441" height="1" fill="#d4d4d4"/>
<rect x="2" y="813" width="39" height="1" fill="#b9b9b9"/>
<rect x="42" y="842" width="1441" height="1" fill="#d4d4d4"/>
<rect x="2" y="842" width="39" height="1" fill="#b9b9b9"/>
<rect x="42" y="871" width="1441" height="1" fill="#d4d4d4"/>
<rect x="2" y="871" width="39" height="1" fill="#b9b9b9"/>
<rect x="42" y="900" width="1441" height="1" fill="#d4d4d4"/>
<rect x="2" y="900" width="39" height="1" fill="#b9b9b9"/>
<rect x="42" y="929" width="1441" height="1" fill="#d4d4d4"/>
<rect x="2" y="929" width="39" height="1" fill="#b9b9b9"/>
<rect x="42" y="958" width="1441" height="1" fill="#d4d4d4"/>
<rect x="2" y="958" width="39" height="1" fill="#b9b9b9"/>
<rect x="41" y="321" width="1" height="663" fill="#9b9b9b"/>
<rect x="2" y="320" width="1482" height="1" fill="#9b9b9b"/>
<text x="21.5" y="343" font-size="20" fill="#217346" text-anchor="middle">1</text>
<text x="21.5" y="372" font-size="20" fill="#262626" text-anchor="middle">2</text>
<text x="21.5" y="401" font-size="20" fill="#262626" text-anchor="middle">3</text>
<text x="21.5" y="430" font-size="20" fill="#262626" text-anchor="middle">4</text>
<text x="21.5" y="459" font-size="20" fill="#262626" text-anchor="middle">5</text>
<text x="21.5" y="488" font-size="20" fill="#262626" text-anchor="middle">6</text>
<text x="21.5" y="517" font-size="20" fill="#262626" text-anchor="middle">7</text>
<text x="21.5" y="546" font-size="20" fill="#262626" text-anchor="middle">8</text>
<text x="21.5" y="575" font-size="20" fill="#262626" text-anchor="middle">9</text>
<text x="21.5" y="604" font-size="20" fill="#262626" text-anchor="middle">10</text>
<text x="21.5" y="633" font-size="20" fill="#262626" text-anchor="middle">11</text>
<text x="21.5" y="662" font-size="20" fill="#262626" text-anchor="middle">12</text>
<text x="21.5" y="691" font-size="20" fill="#262626" text-anchor="middle">13</text>
<text x="21.5" y="720" font-size="20" fill="#262626" text-anchor="middle">14</text>
<text x="21.5" y="749" font-size="20" fill="#262626" text-anchor="middle">15</text>
<text x="21.5" y="778" font-size="20" fill="#262626" text-anchor="middle">16</text>
<text x="21.5" y="807" font-size="20" fill="#262626" text-anchor="middle">17</text>
<text x="21.5" y="836" font-size="20" fill="#262626" text-anchor="middle">18</text>
<text x="21.5" y="865" font-size="20" fill="#262626" text-anchor="middle">19</text>
<text x="21.5" y="894" font-size="20" fill="#262626" text-anchor="middle">20</text>
<text x="21.5" y="923" font-size="20" fill="#262626" text-anchor="middle">21</text>
<text x="21.5" y="952" font-size="20" fill="#262626" text-anchor="middle">22</text>
<text x="21.5" y="981" font-size="20" fill="#262626" text-anchor="middle">23</text>
<text x="45.8" y="343" font-size="20" fill="#000000" textLength="60.9" lengthAdjust="spacing">Facility</text>
<text x="116.7" y="343" font-size="20" fill="#000000" textLength="63.8" lengthAdjust="spacing">Vehicle</text>
<text x="190" y="343" font-size="20" fill="#000000" textLength="40.8" lengthAdjust="spacing">Year</text>
<text x="240.8" y="343" font-size="20" fill="#000000" textLength="49.2" lengthAdjust="spacing">Make</text>
<text x="300.8" y="343" font-size="20" fill="#000000" textLength="57.5" lengthAdjust="spacing">Model</text>
<text x="368.3" y="343" font-size="20" fill="#000000" textLength="129.2" lengthAdjust="spacing">Serial Number</text>
<text x="508" y="343" font-size="20" fill="#000000" textLength="114" lengthAdjust="spacing">License Plate</text>
<text x="632.5" y="343" font-size="20" fill="#000000" textLength="227.5" lengthAdjust="spacing">Cross-Reference Number</text>
<text x="873.3" y="343" font-size="20" fill="#000000" textLength="44.5" lengthAdjust="spacing">Class</text>
<text x="929" y="343" font-size="20" fill="#000000" textLength="109.7" lengthAdjust="spacing">Department</text>
<text x="1048.7" y="343" font-size="20" fill="#000000" textLength="154.6" lengthAdjust="spacing">Customer Facility</text>
<text x="1214.7" y="343" font-size="20" fill="#000000" textLength="167.3" lengthAdjust="spacing">Customer Number</text>
<clipPath id="cm"><rect x="1390" y="321" width="93" height="29"/></clipPath>
<g clip-path="url(#cm)">
<text x="1393.7" y="343" font-size="20" fill="#000000" textLength="104.3" lengthAdjust="spacing">Registration</text>
</g>
<rect x="41" y="320" width="72" height="30" fill="none" stroke="#217346" stroke-width="2"/>
<rect x="108" y="345" width="8" height="8" fill="#ffffff"/>
<rect x="109" y="346" width="6" height="6" fill="#217346"/>
<rect x="1483" y="320" width="1" height="664" fill="#9b9b9b"/>
<rect x="1484" y="320" width="2" height="664" fill="#ececec"/>
<rect x="1486" y="293" width="20" height="691" fill="#dadada"/>
<rect x="1486.5" y="293.5" width="20" height="24" fill="#ffffff" stroke="#c6c6c6" stroke-width="1"/>
<polygon points="1493,308 1504,308 1498.5,302" fill="#777777"/>
<rect x="1486.5" y="318.5" width="20" height="612" fill="#ffffff" stroke="#ababab" stroke-width="1"/>
<rect x="1486.5" y="961.5" width="20" height="24" fill="#ffffff" stroke="#c6c6c6" stroke-width="1"/>
<polygon points="1492.8,971.2 1504,971.2 1498.4,977" fill="#777777"/>
<rect x="0" y="292" width="1" height="692" fill="#0b4a8a"/>
<rect x="1" y="292" width="1" height="692" fill="#217346"/>
</svg>
</div>
<div id="bottombar">
<svg style="top:984px" class="bottom" width="1506" height="60" viewBox="0 984 1506 60">
<rect x="0" y="984" width="1506" height="35" fill="#e6e6e6"/>
<rect x="2" y="984" width="1482" height="1" fill="#9b9b9b"/>
<polygon points="37,995 37,1006 31,1000.5" fill="#c3c3c3"/>
<polygon points="66,995 66,1006 72,1000.5" fill="#c3c3c3"/>
<rect x="120" y="984" width="317" height="29" fill="#ffffff"/>
<rect x="120" y="984" width="1" height="29" fill="#9b9b9b"/>
<rect x="436" y="984" width="1" height="29" fill="#9b9b9b"/>
<rect x="120" y="1013" width="317" height="2" fill="#217346"/>
<text x="132.2" y="1006" font-size="19.4" fill="#217346" textLength="291.8" lengthAdjust="spacingAndGlyphs" font-weight="bold">vehimpfile2018071612222635</text>
<rect x="1487" y="984" width="19" height="1" fill="#ffffff"/>
<rect x="1486" y="984" width="1" height="2" fill="#c6c6c6"/>
<rect x="1486" y="985" width="20" height="1" fill="#c6c6c6"/>
<circle cx="487" cy="1000.8" r="10.4" fill="none" stroke="#777777" stroke-width="1.2"/>
<path d="M482,1000.8 H492 M487,995.8 V1005.8" fill="none" stroke="#666666" stroke-width="1.4"/>
<rect x="906" y="993" width="3" height="3" fill="#ababab"/>
<rect x="906" y="999" width="3" height="3" fill="#ababab"/>
<rect x="906" y="1005" width="3" height="3" fill="#ababab"/>
<rect x="926" y="988" width="559" height="25" fill="#dadada"/>
<rect x="926.5" y="988.5" width="24" height="24" fill="#ffffff" stroke="#c6c6c6" stroke-width="1"/>
<polygon points="941,994.6 941,1006 935,1000.3" fill="#6a6a6a"/>
<rect x="951.5" y="988.5" width="37" height="24" fill="#ffffff" stroke="#ababab" stroke-width="1"/>
<rect x="1460.5" y="988.5" width="24" height="24" fill="#ffffff" stroke="#c6c6c6" stroke-width="1"/>
<polygon points="1470,994.6 1470,1006 1476.2,1000.3" fill="#6a6a6a"/>
<rect x="0" y="1018" width="1506" height="1" fill="#c9c9c9"/>
<rect x="0" y="1019" width="1506" height="25" fill="#f3f3f3"/>
<text x="9.7" y="1040" font-size="15.4" fill="#404040" textLength="41.6" lengthAdjust="spacing">Ready</text>
<rect x="1113" y="1019" width="45" height="25" fill="#c6c6c6"/>
<rect x="1126.6" y="1025.6" width="17.8" height="20.8" fill="none" stroke="#6a6a6a" stroke-width="1.2"/>
<path d="M1132.3,1025 V1044 M1138.7,1025 V1044 M1126,1031.3 H1145 M1126,1037.7 H1145" fill="none" stroke="#6a6a6a" stroke-width="1.2"/>
<rect x="1171.6" y="1025.6" width="17.8" height="20.8" fill="none" stroke="#6a6a6a" stroke-width="1.2"/>
<rect x="1175.6" y="1029.6" width="9.8" height="12.8" fill="none" stroke="#6a6a6a" stroke-width="1.2"/>
<path d="M1178,1033.5 H1183 M1178,1036.5 H1183 M1178,1039.5 H1183" fill="none" stroke="#6a6a6a" stroke-width="1.2"/>
<rect x="1216.6" y="1025.6" width="17.8" height="16.8" fill="none" stroke="#6a6a6a" stroke-width="1.2"/>
<path d="M1222.5,1025 V1034.6 M1228.5,1025 V1034.6 M1216,1034.6 H1228.6" fill="none" stroke="#6a6a6a" stroke-width="1.2"/>
<rect x="1254" y="1033" width="11" height="2.4" fill="#5a5a5a"/>
<rect x="1271" y="1033.4" width="148" height="1.4" fill="#a0a0a0"/>
<rect x="1341" y="1026" width="8" height="17" fill="#737373"/>
<path d="M1424.6,1034.2 H1436.8 M1430.7,1028.2 V1040.2" fill="none" stroke="#5a5a5a" stroke-width="2.2"/>
<text x="1450.5" y="1040" font-size="15.4" fill="#404040" textLength="38.3" lengthAdjust="spacing">100%</text>
<rect x="0" y="984" width="1" height="60" fill="#0b4a8a"/>
<rect x="1" y="984" width="1" height="60" fill="#217346"/>
</svg>
</div>
</body></html>
